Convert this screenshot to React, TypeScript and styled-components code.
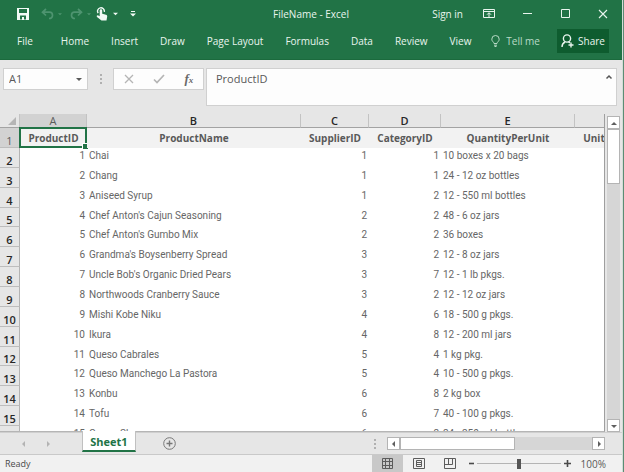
import React, { useState } from "react";
import styled, { createGlobalStyle, css } from "styled-components";

const GlobalStyle = createGlobalStyle`
  * { box-sizing: border-box; }
  html, body, #root { height: 100%; margin: 0; }
  body {
    background: #5b8c74;
    font-family: "Open Sans", "Noto Sans", sans-serif;
    font-size: 10px;
    line-height: 14px;
    color: #595959;
    overflow: hidden;
  }
  button, input, textarea { font: inherit; color: inherit; }
`;

const Window = styled.main`
  display: flex;
  flex-direction: column;
  height: 100%;
  margin-right: 1px;
  border-right: 1px solid #d3ddd7;
  background: #e6e6e6;
`;

const BareButton = styled.button`
  display: flex;
  align-items: center;
  justify-content: center;
  flex: none;
  padding: 0;
  border: 0;
  background: none;
`;

/* Title bar and ribbon tabs */

const TitleBar = styled.header`
  display: grid;
  grid-template-columns: 1fr auto 1fr;
  align-items: center;
  flex: none;
  height: 27px;
  background: #217346;
  color: #e9f5ee;
`;

const QuickAccess = styled.div`
  display: flex;
  align-items: center;
  padding-left: 16px;
`;

const QuickButton = styled(BareButton)<{ $gap?: number; $dim?: boolean }>`
  margin-right: ${(p) => p.$gap ?? 0}px;
  color: ${(p) => (p.$dim ? "#4e9470" : "#f1faf5")};
`;

const Title = styled.h1`
  margin: 0;
  font-size: 10px;
  font-weight: 400;
`;

const WindowControls = styled.div`
  display: flex;
  align-items: center;
  justify-content: flex-end;
  padding-right: 6px;
`;

const SignIn = styled(BareButton)`
  margin-right: 15px;
`;

const ControlButton = styled(BareButton)`
  width: 26px;
  height: 20px;
  margin-left: 12px;
`;

const RibbonControl = styled(BareButton)`
  width: 22px;
  margin-right: 2px;
`;

const Ribbon = styled.nav`
  display: flex;
  align-items: center;
  flex: none;
  height: 33px;
  padding: 0 13px 4px 17px;
  border-bottom: 1px solid #1b6a3d;
  background: #217346;
  color: #e9f5ee;
`;

const RibbonTabs = styled.div`
  display: flex;
  gap: 22px;
`;

const RibbonTab = styled(BareButton)<{ $first?: boolean }>`
  margin-right: ${(p) => (p.$first ? 6 : 0)}px;
  white-space: nowrap;
`;

const TellMe = styled(BareButton)`
  gap: 6px;
  margin-left: auto;
  color: #b9dac7;
`;

const ShareButton = styled(BareButton)`
  gap: 4px;
  width: 52px;
  height: 24px;
  margin-left: 17px;
  background: #0e5c2f;
`;

/* Formula bar */

const FormulaBar = styled.section`
  display: flex;
  align-items: flex-start;
  flex: none;
  height: 54px;
  padding: 8px 5px 0 3px;
`;

const box = css`
  display: flex;
  align-items: center;
  border: 1px solid #d0d0d0;
  background: #fdfdfd;
`;

const NameBox = styled.div`
  ${box}
  width: 85px;
  height: 22px;
  padding-right: 5px;
`;

const NameInput = styled.input`
  flex: 1;
  min-width: 0;
  padding: 0 0 0 5px;
  border: 0;
  outline: 0;
  background: none;
  font-size: 11px;
`;

const Grip = styled.div`
  display: flex;
  align-items: center;
  justify-content: center;
  flex: none;
  width: 25px;
  height: 22px;
  color: #b0b0b0;
`;

const FormulaTools = styled.div`
  ${box}
  justify-content: space-around;
  flex: none;
  width: 91px;
  height: 22px;
  margin-right: 2px;
`;

const FormulaField = styled.div`
  ${box}
  flex: 1;
  align-items: flex-start;
  height: 38px;
  padding: 2px 2px 0 9px;
`;

const FormulaText = styled.textarea`
  flex: 1;
  min-width: 0;
  height: 30px;
  padding: 0;
  border: 0;
  outline: 0;
  resize: none;
  background: none;
  font-size: 11px;
  line-height: 16px;
`;

const CollapseButton = styled(BareButton)`
  width: 10px;
  height: 12px;
`;

/* Worksheet */

const Workspace = styled.section`
  display: flex;
  flex: 1;
  min-height: 0;
  padding-right: 2px;
`;

const Sheet = styled.div`
  flex: 1;
  min-width: 0;
  margin-right: 2px;
  overflow: hidden;
  border-right: 1px solid #9f9f9f;
  border-bottom: 1px solid #b5b5b5;
  background: #ffffff;
`;

const Grid = styled.table`
  width: 613px;
  height: 332px;
  table-layout: fixed;
  border-spacing: 0;
`;

const Col = styled.col<{ $w: number }>`
  width: ${(p) => p.$w}px;
`;

const LetterRow = styled.tr`
  height: 14px;
`;

const HeaderRow = styled.tr`
  height: 20px;
`;

const ColumnLetter = styled.th<{ $selected?: boolean }>`
  padding: 0;
  border-right: 1px solid #c3c3c3;
  border-bottom: 1px solid #a3a3a3;
  background: ${(p) => (p.$selected ? "#d2d2d2" : "#e6e6e6")};
  color: ${(p) => (p.$selected ? "#5c5c5c" : "#262626")};
  font-size: 11px;
  font-weight: ${(p) => (p.$selected ? 400 : 600)};
  line-height: 13px;
`;

const Corner = styled.td`
  padding: 0 3px 2px 0;
  border-right: 1px solid #c3c3c3;
  border-bottom: 1px solid #a3a3a3;
  background: #e6e6e6;
  line-height: 0;
  text-align: right;
  vertical-align: bottom;
`;

const RowNumber = styled.th<{ $selected?: boolean }>`
  padding: 0;
  border-right: 1px solid #b3b3b3;
  border-bottom: 1px solid #bdbdbd;
  background: ${(p) => (p.$selected ? "#d2d2d2" : "#e6e6e6")};
  color: ${(p) => (p.$selected ? "#5c5c5c" : "#262626")};
  font-size: 11px;
  font-weight: ${(p) => (p.$selected ? 400 : 600)};
  line-height: 13px;
  vertical-align: bottom;
`;

const FieldCell = styled.td`
  position: relative;
  padding: 0;
  background: #f2f2f2;
  font-weight: 700;
  text-align: center;
  white-space: nowrap;
`;

const Selection = styled.span`
  position: absolute;
  inset: -1px 0 0 -1px;
  border: 2px solid #217346;

  &::after {
    content: "";
    position: absolute;
    right: -3px;
    bottom: -3px;
    width: 5px;
    height: 5px;
    border: 1px solid #ffffff;
    border-right: 0;
    border-bottom: 0;
    background: #217346;
  }
`;

const Cell = styled.td<{ $number?: boolean }>`
  padding: 1px 2px 0;
  color: #666666;
  font-family: Roboto, "Open Sans", sans-serif;
  text-align: ${(p) => (p.$number ? "right" : "left")};
  vertical-align: top;
  white-space: nowrap;
`;

/* Scroll bars */

const VerticalScroll = styled.div`
  display: flex;
  flex-direction: column;
  flex: none;
  width: 13px;
  margin-top: 2px;
  background: #d6d6d6;
`;

const HorizontalScroll = styled.div`
  display: flex;
  width: 218px;
  height: 13px;
  margin-right: 17px;
  background: #d6d6d6;
`;

const ScrollButton = styled(BareButton)`
  width: 13px;
  height: 13px;
  border: 1px solid #b4b4b4;
  background: #ffffff;
  color: #5f5f5f;
`;

const Thumb = styled.div<{ $vertical?: boolean }>`
  flex: none;
  width: ${(p) => (p.$vertical ? "13px" : "115px")};
  height: ${(p) => (p.$vertical ? "55px" : "13px")};
  margin-right: ${(p) => (p.$vertical ? "0" : "auto")};
  margin-bottom: ${(p) => (p.$vertical ? "auto" : "0")};
  border: 1px solid #b4b4b4;
  background: #ffffff;
`;

/* Sheet tabs and status bar */

const TabBar = styled.nav`
  display: flex;
  align-items: center;
  flex: none;
  height: 23px;
  border-top: 1px solid #cfcfcf;
  border-bottom: 1px solid #c9c9c9;
  color: #b3b3b3;
`;

const TabArrows = styled.div`
  display: flex;
  flex: none;
  gap: 18px;
  width: 82px;
  padding-left: 21px;
`;

const SheetTab = styled(BareButton)`
  align-self: flex-start;
  width: 54px;
  height: 21px;
  margin-top: -2px;
  padding-top: 2px;
  border: 1px solid #c0c0c0;
  border-top: 0;
  border-bottom: 2px solid #217346;
  background: #ffffff;
  color: #217346;
  font-size: 11px;
  font-weight: 700;
`;

const AddSheet = styled(BareButton)`
  margin-left: 27px;
  color: #777777;
`;

const TabSpacer = styled.div`
  flex: 1;
`;

const StatusBar = styled.footer`
  display: flex;
  align-items: center;
  flex: none;
  height: 17px;
  padding: 0 16px 0 5px;
  background: #f1f1f1;
  font-size: 9px;
`;

const Ready = styled.span`
  margin-right: auto;
  color: #4a4a4a;
`;

const ViewButton = styled(BareButton)<{ $active?: boolean }>`
  width: 31px;
  height: 17px;
  background: ${(p) => (p.$active ? "#c8c8c8" : "transparent")};
  color: #5c5c5c;
`;

const ZoomStep = styled(BareButton)`
  width: 12px;
  height: 17px;
  color: #4a4a4a;
`;

const ZoomRange = styled.input`
  width: 84px;
  height: 12px;
  margin: 0;
  appearance: none;
  background: linear-gradient(#b4b4b4, #b4b4b4) center / 100% 1px no-repeat;

  &::-webkit-slider-thumb {
    appearance: none;
    width: 4px;
    height: 10px;
    background: #555555;
  }
`;

const ZoomValue = styled.output`
  width: 27px;
  margin-left: 6px;
  font-size: 10px;
  text-align: right;
`;

type ArrowProps = { dir: "up" | "down" | "left" | "right"; size?: number };

const arrowPoints = {
  up: "0,5 3,2 6,5",
  down: "0,2 6,2 3,5",
  left: "4,0 4,6 1,3",
  right: "2,0 2,6 5,3",
};

const Arrow = ({ dir, size = 6 }: ArrowProps) => (
  <svg width={size} height={size} viewBox="0 0 6 6" fill="currentColor" aria-hidden>
    <polygon points={arrowPoints[dir]} />
  </svg>
);

const SaveIcon = () => (
  <svg width="14" height="14" viewBox="0 0 14 14" aria-hidden>
    <path fill="currentColor" fillRule="evenodd" d="M1 1h12v12H1zM3 2v4h8V2zM4 8.500v4h2V10h2v2.500h2v-4z" />
  </svg>
);

const UndoIcon = ({ redo }: { redo?: boolean }) => (
  <svg width="13" height="12" viewBox="0 0 13 12" fill="none" stroke="currentColor" strokeWidth="1.700" aria-hidden>
    <g transform={redo ? "matrix(-1 0 0 1 13 0)" : undefined}>
      <path d="M5 1L1.500 4.200L5 7.500M2 4.200H8.500C11 4.200 11.500 6 11.500 7.200C11.500 9 10 10.500 8 10.500" />
    </g>
  </svg>
);

const TouchIcon = () => (
  <svg width="12" height="14" viewBox="0 0 12 14" aria-hidden>
    <path d="M2.200 6.200A3.400 3.400 0 1 1 8.300 4.800" fill="none" stroke="currentColor" strokeWidth="1.400" />
    <path
      fill="currentColor"
      d="M3.700 3.500c0-1.600 2.500-1.600 2.500 0V6.700l3.800 1c1 .3 1.300.9 1.200 1.700L10.500 13.500H5.500L1 9.900c-.8-1.100.300-2.100 1.300-1.500L3.700 9.300z"
    />
  </svg>
);

const CustomizeIcon = () => (
  <svg width="6" height="8" viewBox="0 0 6 8" fill="currentColor" aria-hidden>
    <path d="M1 1h4v1H1zM0 3.500h6L3 6.500z" />
  </svg>
);

const RibbonIcon = () => (
  <svg width="12" height="10" viewBox="0 0 12 10" fill="none" stroke="currentColor" aria-hidden>
    <path d="M.5.500h11v8H.5zM.5 2.500h11M6 8V4M4 5.700L6 3.700L8 5.700" />
  </svg>
);

const MinimizeIcon = () => (
  <svg width="9" height="9" viewBox="0 0 9 9" stroke="currentColor" aria-hidden>
    <path d="M0 4.500h9" />
  </svg>
);

const MaximizeIcon = () => (
  <svg width="9" height="9" viewBox="0 0 9 9" fill="none" stroke="currentColor" aria-hidden>
    <path d="M.5.500h8v8h-8z" />
  </svg>
);

const CloseIcon = () => (
  <svg width="10" height="10" viewBox="0 0 10 10" stroke="currentColor" strokeWidth="1.100" aria-hidden>
    <path d="M1 1l8 8M9 1l-8 8" />
  </svg>
);

const BulbIcon = () => (
  <svg width="9" height="12" viewBox="0 0 9 12" fill="none" stroke="currentColor" aria-hidden>
    <path d="M3 8.500C3 7 .8 6.500.8 4.200a3.700 3.700 0 0 1 7.400 0C8.200 6.500 6 7 6 8.500zM3 10.200h3M3.500 11.500h2" />
  </svg>
);

const ShareIcon = () => (
  <svg width="13" height="14" viewBox="0 0 13 14" fill="none" stroke="currentColor" strokeWidth="1.400" aria-hidden>
    <circle cx="6" cy="4.500" r="3.600" />
    <path d="M1 13c0-2.500 1.200-4.200 3-5M7.500 7.800l1.500 1M10 8.500v5M7.500 11h5" />
  </svg>
);

const CancelIcon = () => (
  <svg width="10" height="10" viewBox="0 0 10 10" stroke="#b5b5b5" strokeWidth="1.300" aria-hidden>
    <path d="M1 1l8 8M9 1l-8 8" />
  </svg>
);

const CheckIcon = () => (
  <svg width="12" height="10" viewBox="0 0 12 10" fill="none" stroke="#b5b5b5" strokeWidth="1.700" aria-hidden>
    <path d="M1 5.500L4 8.500L11 1" />
  </svg>
);

const FunctionMark = styled.span`
  font-family: "Liberation Serif", serif;
  font-size: 13px;
  font-style: italic;
  font-weight: 700;
  color: #6a6a6a;

  small {
    font-size: 9px;
  }
`;

const DotsIcon = () => (
  <svg width="2" height="10" viewBox="0 0 2 10" fill="currentColor" aria-hidden>
    <path d="M0 0h2v2H0zM0 4h2v2H0zM0 8h2v2H0z" />
  </svg>
);

const ChevronUp = () => (
  <svg width="8" height="6" viewBox="0 0 8 6" fill="none" stroke="#555" strokeWidth="1.500" aria-hidden>
    <path d="M1.500 4.500L4 2L6.500 4.500" />
  </svg>
);

const CornerIcon = () => (
  <svg width="8" height="8" viewBox="0 0 8 8" fill="#b5b5b5" aria-hidden>
    <path d="M8 0v8H0z" />
  </svg>
);

const PlusCircle = () => (
  <svg width="13" height="13" viewBox="0 0 13 13" fill="none" stroke="currentColor" aria-hidden>
    <circle cx="6.500" cy="6.500" r="5.800" />
    <path d="M6.500 3.500v6M3.500 6.500h6" strokeWidth="1.400" />
  </svg>
);

const NormalViewIcon = () => (
  <svg width="11" height="11" viewBox="0 0 11 11" fill="none" stroke="currentColor" aria-hidden>
    <path d="M.5.500h10v10H.5zM3.500 0v11M7.500 0v11M0 3.500h11M0 7.500h11" />
  </svg>
);

const PageLayoutIcon = () => (
  <svg width="12" height="11" viewBox="0 0 12 11" fill="none" stroke="currentColor" aria-hidden>
    <path d="M.5.500h11v10H.5zM3.500 2.500h5v6h-5zM4 4.500h4M4 6.500h4" />
  </svg>
);

const PageBreakIcon = () => (
  <svg width="12" height="11" viewBox="0 0 12 11" fill="none" stroke="currentColor" aria-hidden>
    <path d="M.5.500h11v10H.5zM1 6.500h7.500V.5M4.500 1v5" />
  </svg>
);

const SignIcon = ({ plus }: { plus?: boolean }) => (
  <svg width="7" height="7" viewBox="0 0 7 7" stroke="currentColor" strokeWidth="1.600" aria-hidden>
    <path d={plus ? "M0 3.500h7M3.500 0v7" : "M1 3.500h5"} />
  </svg>
);

const tabs = ["File", "Home", "Insert", "Draw", "Page Layout", "Formulas", "Data", "Review", "View"];
const letters = ["A", "B", "C", "D", "E", ""];
const widths = [20, 67, 214, 68, 72, 134, 38];
const fields = ["ProductID", "ProductName", "SupplierID", "CategoryID", "QuantityPerUnit", "Unit"];

type Product = [number, string, number, number, string];

const products: Product[] = [
  [1, "Chai", 1, 1, "10 boxes x 20 bags"],
  [2, "Chang", 1, 1, "24 - 12 oz bottles"],
  [3, "Aniseed Syrup", 1, 2, "12 - 550 ml bottles"],
  [4, "Chef Anton's Cajun Seasoning", 2, 2, "48 - 6 oz jars"],
  [5, "Chef Anton's Gumbo Mix", 2, 2, "36 boxes"],
  [6, "Grandma's Boysenberry Spread", 3, 2, "12 - 8 oz jars"],
  [7, "Uncle Bob's Organic Dried Pears", 3, 7, "12 - 1 lb pkgs."],
  [8, "Northwoods Cranberry Sauce", 3, 2, "12 - 12 oz jars"],
  [9, "Mishi Kobe Niku", 4, 6, "18 - 500 g pkgs."],
  [10, "Ikura", 4, 8, "12 - 200 ml jars"],
  [11, "Queso Cabrales", 5, 4, "1 kg pkg."],
  [12, "Queso Manchego La Pastora", 5, 4, "10 - 500 g pkgs."],
  [13, "Konbu", 6, 8, "2 kg box"],
  [14, "Tofu", 6, 7, "40 - 100 g pkgs."],
  [15, "Genen Shouyu", 6, 2, "24 - 250 ml bottles"],
];

export default function App() {
  const [zoom, setZoom] = useState(100);
  const [formula, setFormula] = useState("ProductID");
  const [cellName, setCellName] = useState("A1");

  return (
    <>
      <GlobalStyle />
      <Window>
        <TitleBar>
          <QuickAccess>
            <QuickButton $gap={11} aria-label="Save"><SaveIcon /></QuickButton>
            <QuickButton $gap={4} $dim aria-label="Undo"><UndoIcon /></QuickButton>
            <QuickButton $gap={8} $dim aria-label="Undo history"><Arrow dir="down" size={4} /></QuickButton>
            <QuickButton $gap={4} $dim aria-label="Redo"><UndoIcon redo /></QuickButton>
            <QuickButton $gap={5} $dim aria-label="Redo history"><Arrow dir="down" size={4} /></QuickButton>
            <QuickButton $gap={5} aria-label="Touch mode"><TouchIcon /></QuickButton>
            <QuickButton $gap={12} aria-label="Touch options"><Arrow dir="down" size={5} /></QuickButton>
            <QuickButton aria-label="Customize toolbar"><CustomizeIcon /></QuickButton>
          </QuickAccess>
          <Title>FileName - Excel</Title>
          <WindowControls>
            <SignIn>Sign in</SignIn>
            <RibbonControl aria-label="Ribbon display options"><RibbonIcon /></RibbonControl>
            <ControlButton aria-label="Minimize"><MinimizeIcon /></ControlButton>
            <ControlButton aria-label="Maximize"><MaximizeIcon /></ControlButton>
            <ControlButton aria-label="Close"><CloseIcon /></ControlButton>
          </WindowControls>
        </TitleBar>

        <Ribbon>
          <RibbonTabs>
            {tabs.map((tab, i) => (
              <RibbonTab key={tab} $first={i === 0}>{tab}</RibbonTab>
            ))}
          </RibbonTabs>
          <TellMe><BulbIcon />Tell me</TellMe>
          <ShareButton><ShareIcon />Share</ShareButton>
        </Ribbon>

        <FormulaBar>
          <NameBox>
            <NameInput aria-label="Name box" value={cellName} onChange={(e) => setCellName(e.target.value)} />
            <BareButton aria-label="Named ranges"><Arrow dir="down" /></BareButton>
          </NameBox>
          <Grip><DotsIcon /></Grip>
          <FormulaTools>
            <BareButton aria-label="Cancel"><CancelIcon /></BareButton>
            <BareButton aria-label="Enter"><CheckIcon /></BareButton>
            <BareButton aria-label="Insert function"><FunctionMark>f<small>x</small></FunctionMark></BareButton>
          </FormulaTools>
          <FormulaField>
            <FormulaText aria-label="Formula" spellCheck={false} value={formula} onChange={(e) => setFormula(e.target.value)} />
            <CollapseButton aria-label="Collapse formula bar"><ChevronUp /></CollapseButton>
          </FormulaField>
        </FormulaBar>

        <Workspace>
          <Sheet>
            <Grid>
              <colgroup>
                {widths.map((w, i) => <Col key={i} $w={w} />)}
              </colgroup>
              <thead>
                <LetterRow>
                  <Corner><CornerIcon /></Corner>
                  {letters.map((letter, i) => (
                    <ColumnLetter key={i} scope="col" $selected={i === 0}>{letter}</ColumnLetter>
                  ))}
                </LetterRow>
              </thead>
              <tbody>
                <HeaderRow>
                  <RowNumber scope="row" $selected>1</RowNumber>
                  {fields.map((field, i) => (
                    <FieldCell key={field}>{field}{i === 0 && <Selection />}</FieldCell>
                  ))}
                </HeaderRow>
                {products.map(([id, name, supplier, category, quantity]) => (
                  <tr key={id}>
                    <RowNumber scope="row">{id + 1}</RowNumber>
                    <Cell $number>{id}</Cell>
                    <Cell>{name}</Cell>
                    <Cell $number>{supplier}</Cell>
                    <Cell $number>{category}</Cell>
                    <Cell>{quantity}</Cell>
                    <Cell />
                  </tr>
                ))}
              </tbody>
            </Grid>
          </Sheet>
          <VerticalScroll>
            <ScrollButton aria-label="Scroll up"><Arrow dir="up" /></ScrollButton>
            <Thumb $vertical />
            <ScrollButton aria-label="Scroll down"><Arrow dir="down" /></ScrollButton>
          </VerticalScroll>
        </Workspace>

        <TabBar>
          <TabArrows>
            <BareButton aria-label="Previous sheet"><Arrow dir="left" /></BareButton>
            <BareButton aria-label="Next sheet"><Arrow dir="right" /></BareButton>
          </TabArrows>
          <SheetTab>Sheet1</SheetTab>
          <AddSheet aria-label="Add sheet"><PlusCircle /></AddSheet>
          <TabSpacer />
          <Grip><DotsIcon /></Grip>
          <HorizontalScroll>
            <ScrollButton aria-label="Scroll left"><Arrow dir="left" /></ScrollButton>
            <Thumb />
            <ScrollButton aria-label="Scroll right"><Arrow dir="right" /></ScrollButton>
          </HorizontalScroll>
        </TabBar>

        <StatusBar>
          <Ready>Ready</Ready>
          <ViewButton $active aria-label="Normal view"><NormalViewIcon /></ViewButton>
          <ViewButton aria-label="Page layout view"><PageLayoutIcon /></ViewButton>
          <ViewButton aria-label="Page break preview"><PageBreakIcon /></ViewButton>
          <ZoomStep aria-label="Zoom out" onClick={() => setZoom(Math.max(0, zoom - 10))}><SignIcon /></ZoomStep>
          <ZoomRange aria-label="Zoom" type="range" min={0} max={200} value={zoom} onChange={(e) => setZoom(Number(e.target.value))} />
          <ZoomStep aria-label="Zoom in" onClick={() => setZoom(Math.min(200, zoom + 10))}><SignIcon plus /></ZoomStep>
          <ZoomValue>{zoom}%</ZoomValue>
        </StatusBar>
      </Window>
    </>
  );
}
